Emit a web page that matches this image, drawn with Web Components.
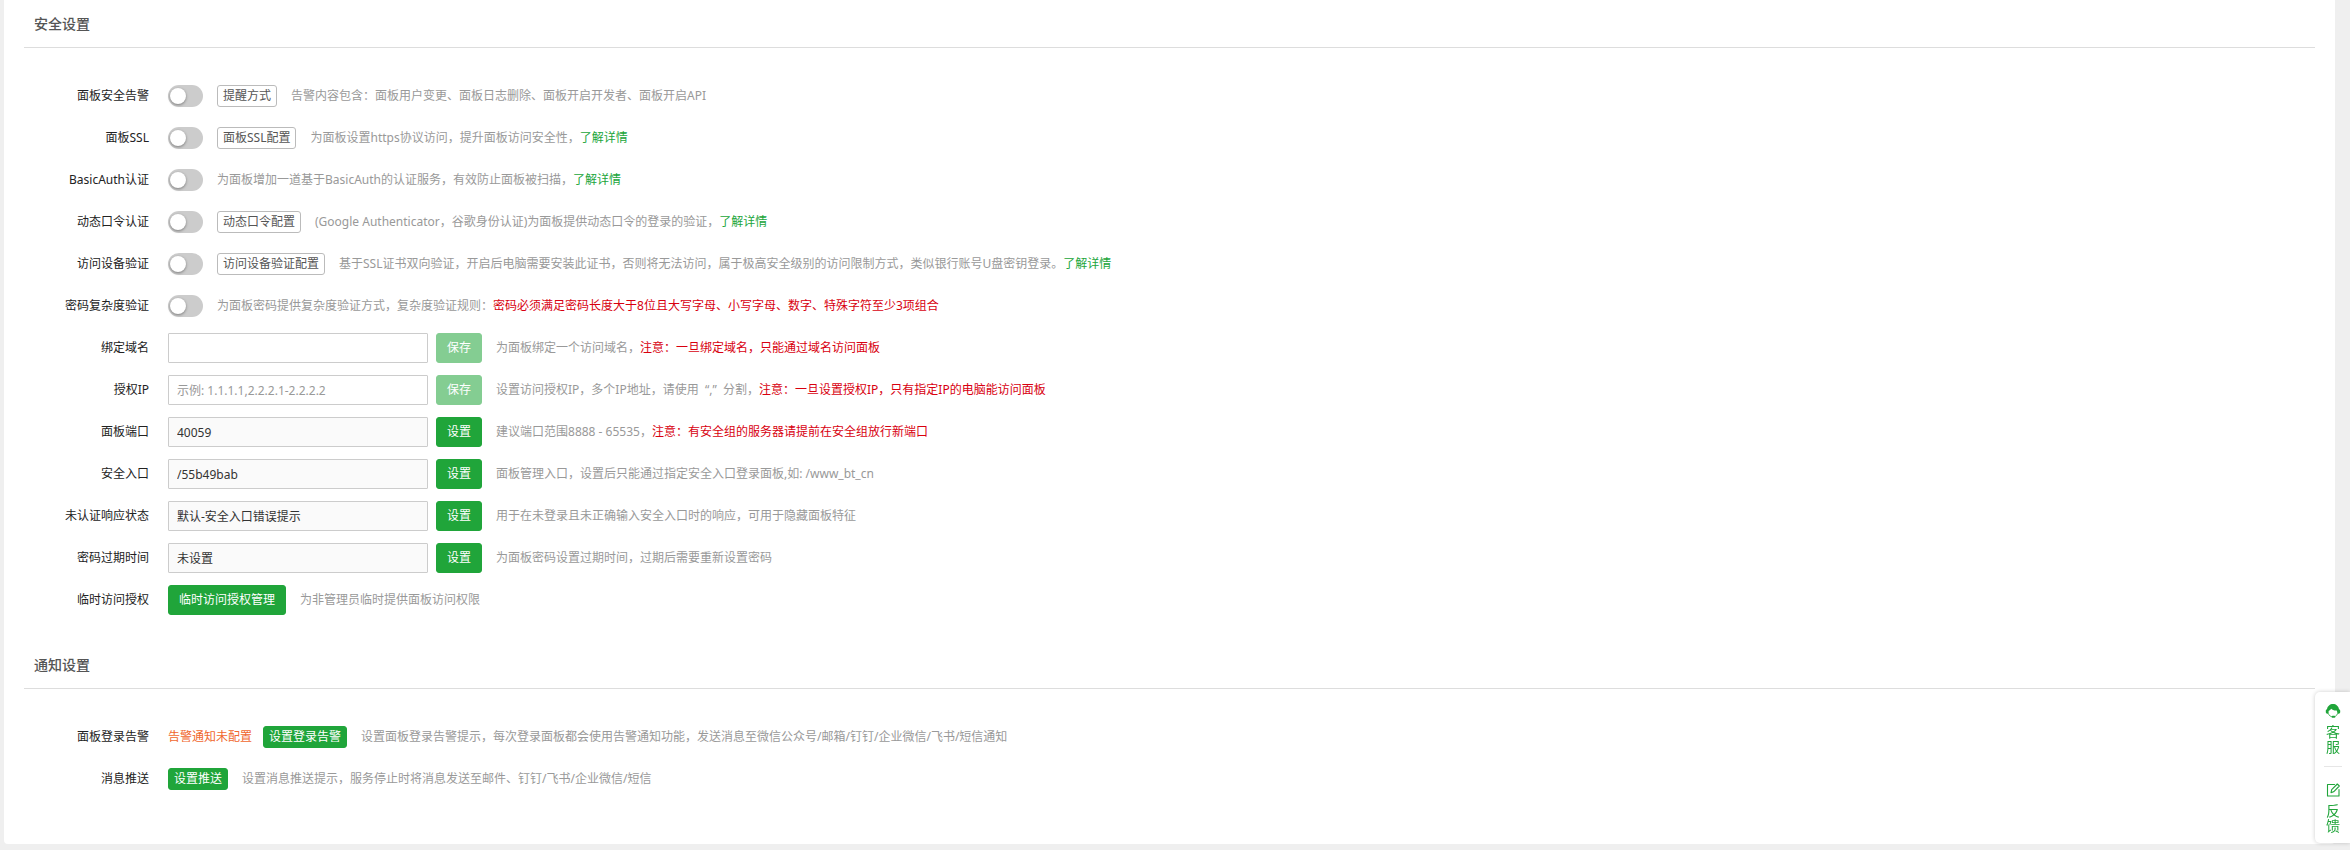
<!DOCTYPE html>
<html lang="zh-CN">
<head>
<meta charset="UTF-8">
<meta name="viewport" content="width=device-width, initial-scale=1.0">
<title>安全设置</title>
<style>
    body {
        margin: 0;
        padding: 0 15px 6px 4px;
        background: #efefef;
        color: #222;
        font: 12px/18px "Noto Sans", "Noto Sans CJK SC", sans-serif;
        text-spacing-trim: space-all;
    }
</style>
</head>
<body>
<settings-panel>
    <settings-section heading="安全设置">
        <switch-row label="面板安全告警" action="提醒方式">告警内容包含：面板用户变更、面板日志删除、面板开启开发者、面板开启API</switch-row>
        <switch-row label="面板SSL" action="面板SSL配置">为面板设置https协议访问，提升面板访问安全性，<a href="#ssl">了解详情</a></switch-row>
        <switch-row label="BasicAuth认证">为面板增加一道基于BasicAuth的认证服务，有效防止面板被扫描，<a href="#basic-auth">了解详情</a></switch-row>
        <switch-row label="动态口令认证" action="动态口令配置">(Google Authenticator，谷歌身份认证)为面板提供动态口令的登录的验证，<a href="#otp">了解详情</a></switch-row>
        <switch-row label="访问设备验证" action="访问设备验证配置">基于SSL证书双向验证，开启后电脑需要安装此证书，否则将无法访问，属于极高安全级别的访问限制方式，类似银行账号U盘密钥登录。<a href="#device">了解详情</a></switch-row>
        <switch-row label="密码复杂度验证">为面板密码提供复杂度验证方式，复杂度验证规则：<em>密码必须满足密码长度大于8位且大写字母、小写字母、数字、特殊字符至少3项组合</em></switch-row>
        <field-row label="绑定域名" action="保存" editable>为面板绑定一个访问域名，<em>注意：一旦绑定域名，只能通过域名访问面板</em></field-row>
        <field-row label="授权IP" action="保存" placeholder="示例: 1.1.1.1,2.2.2.1-2.2.2.2" editable>设置访问授权IP，多个IP地址，请使用&nbsp; “,”&nbsp; 分割，<em>注意：一旦设置授权IP，只有指定IP的电脑能访问面板</em></field-row>
        <field-row label="面板端口" action="设置" value="40059">建议端口范围8888 - 65535，<em>注意：有安全组的服务器请提前在安全组放行新端口</em></field-row>
        <field-row label="安全入口" action="设置" value="/55b49bab">面板管理入口，设置后只能通过指定安全入口登录面板,如: /www_bt_cn</field-row>
        <field-row label="未认证响应状态" action="设置" value="默认-安全入口错误提示">用于在未登录且未正确输入安全入口时的响应，可用于隐藏面板特征</field-row>
        <field-row label="密码过期时间" action="设置" value="未设置">为面板密码设置过期时间，过期后需要重新设置密码</field-row>
        <action-row label="临时访问授权" action="临时访问授权管理" large>为非管理员临时提供面板访问权限</action-row>
    </settings-section>
    <settings-section heading="通知设置">
        <action-row label="面板登录告警" status="告警通知未配置" action="设置登录告警">设置面板登录告警提示，每次登录面板都会使用告警通知功能，发送消息至微信公众号/邮箱/钉钉/企业微信/飞书/短信通知</action-row>
        <action-row label="消息推送" action="设置推送">设置消息推送提示，服务停止时将消息发送至邮件、钉钉/飞书/企业微信/短信</action-row>
    </settings-section>
</settings-panel>
<service-dock></service-dock>

<script>
    class SettingsPanel extends HTMLElement {
        connectedCallback() {
            this.attachShadow({ mode: 'open' });
            this.shadowRoot.innerHTML = `
                <style>
                    :host {
                        display: flex;
                        flex-direction: column;
                        gap: 26px;
                        padding: 0 20px 50px;
                        background: #fff;
                        border-radius: 0 0 4px 4px;
                    }
                </style>
                <slot></slot>
            `;
        }
    }

    class SettingsSection extends HTMLElement {
        connectedCallback() {
            this.attachShadow({ mode: 'open' });
            this.shadowRoot.innerHTML = `
                <style>
                    :host {
                        display: block;
                    }
                    h2 {
                        margin: 0;
                        padding: 14px 10px 13px;
                        border-bottom: 1px solid #ddd;
                        color: #555;
                        font-size: 14px;
                        font-weight: 500;
                        line-height: 20px;
                    }
                    .rows {
                        display: flex;
                        flex-direction: column;
                        gap: 12px;
                        padding-top: 33px;
                    }
                </style>
                <h2>${this.getAttribute('heading')}</h2>
                <div class="rows"><slot></slot></div>
            `;
        }
    }

    // Shared look of every row: label on the right edge of its column, controls, description
    const rowStyles = `
        :host {
            display: flex;
            align-items: center;
            gap: 14px;
            min-height: 30px;
        }
        .label {
            flex: none;
            width: 125px;
            margin-right: 5px;
            text-align: right;
        }
        .desc {
            color: #999;
        }
        ::slotted(a) {
            color: #20a53a;
            text-decoration: none;
        }
        ::slotted(em) {
            color: #d8000f;
            font-style: normal;
        }
        button {
            flex: none;
            box-sizing: border-box;
            height: 22px;
            margin: 0;
            padding: 0 5px;
            border: 1px solid #20a53a;
            border-radius: 3px;
            background: #20a53a;
            color: #fff;
            font: inherit;
            cursor: pointer;
        }
        button.large {
            height: 30px;
            padding: 0 10px;
        }
        button.plain {
            border-color: #bbb;
            background: #fff;
            color: #555;
        }
        button:disabled {
            opacity: 0.55;
            cursor: default;
        }
    `;

    class SwitchRow extends HTMLElement {
        connectedCallback() {
            const action = this.getAttribute('action');
            this.attachShadow({ mode: 'open' });
            this.shadowRoot.innerHTML = `
                <style>
                    ${rowStyles}
                    input {
                        appearance: none;
                        flex: none;
                        display: flex;
                        align-items: center;
                        box-sizing: border-box;
                        width: 35px;
                        height: 22px;
                        margin: 0;
                        padding: 2px;
                        border-radius: 11px;
                        background: #ccc;
                        cursor: pointer;
                    }
                    input::before {
                        content: "";
                        width: 16px;
                        height: 16px;
                        border-radius: 50%;
                        background: #fff;
                        box-shadow: 0 1px 3px rgba(0, 0, 0, 0.4);
                    }
                    input:checked {
                        justify-content: flex-end;
                        background: #20a53a;
                    }
                </style>
                <label class="label" for="toggle">${this.getAttribute('label')}</label>
                <input type="checkbox" id="toggle" role="switch">
                ${action ? `<button type="button" class="plain">${action}</button>` : ''}
                <span class="desc"><slot></slot></span>
            `;
        }
    }

    class FieldRow extends HTMLElement {
        connectedCallback() {
            const editable = this.hasAttribute('editable');
            this.attachShadow({ mode: 'open' });
            this.shadowRoot.innerHTML = `
                <style>
                    ${rowStyles}
                    .field {
                        display: flex;
                        gap: 8px;
                    }
                    input {
                        box-sizing: border-box;
                        width: 260px;
                        height: 30px;
                        padding: 0 8px;
                        border: 1px solid #ccc;
                        border-radius: 1px;
                        background: #fff;
                        color: #333;
                        font: inherit;
                    }
                    input:read-only {
                        background: #fafafa;
                    }
                    input::placeholder {
                        color: #999;
                    }
                </style>
                <label class="label" for="field">${this.getAttribute('label')}</label>
                <div class="field">
                    <input type="text" id="field" ${editable ? '' : 'readonly'}>
                    <button type="button" class="large" ${editable ? 'disabled' : ''}>${this.getAttribute('action')}</button>
                </div>
                <span class="desc"><slot></slot></span>
            `;

            const input = this.shadowRoot.querySelector('input');
            input.value = this.getAttribute('value') || '';
            input.placeholder = this.getAttribute('placeholder') || '';

            // Saving makes sense only once something has been typed
            input.addEventListener('input', () => {
                this.shadowRoot.querySelector('button').disabled = !input.value;
            });
        }
    }

    class ActionRow extends HTMLElement {
        connectedCallback() {
            const status = this.getAttribute('status');
            this.attachShadow({ mode: 'open' });
            this.shadowRoot.innerHTML = `
                <style>
                    ${rowStyles}
                    .action {
                        display: flex;
                        align-items: center;
                        gap: 11px;
                    }
                    .status {
                        color: #f0672e;
                    }
                </style>
                <span class="label">${this.getAttribute('label')}</span>
                <div class="action">
                    ${status ? `<span class="status">${status}</span>` : ''}
                    <button type="button" class="${this.hasAttribute('large') ? 'large' : ''}">${this.getAttribute('action')}</button>
                </div>
                <span class="desc"><slot></slot></span>
            `;
        }
    }

    class ServiceDock extends HTMLElement {
        connectedCallback() {
            this.attachShadow({ mode: 'open' });
            this.shadowRoot.innerHTML = `
                <style>
                    :host {
                        position: fixed;
                        right: 0;
                        bottom: 7px;
                        box-sizing: border-box;
                        width: 35px;
                        padding: 0 8px 0 9px;
                        border-radius: 5px 0 0 5px;
                        background: #fff;
                        box-shadow: 0 0 4px rgba(0, 0, 0, 0.2);
                    }
                    a {
                        display: flex;
                        flex-direction: column;
                        align-items: center;
                        gap: 5px;
                        padding: 11px 0 12px;
                        color: #20a53a;
                        font-size: 14px;
                        line-height: 15px;
                        text-align: center;
                        text-decoration: none;
                    }
                    a + a {
                        padding: 15px 0 10px;
                        border-top: 1px solid #e6e6e6;
                    }
                    span {
                        width: 14px;
                    }
                    svg {
                        display: block;
                        width: 16px;
                        height: 16px;
                    }
                </style>
                <a href="#service">
                    <svg viewBox="0 0 16 16" fill="#20a53a">
                        <path d="M2 6.200C2.500 3 5 1 8 1s5.500 2 6 5.200c.8.200 1.200.8 1.200 1.500v1.400c0 .9-.6 1.600-1.600 1.600h-1.200c0-1.200-.2-2.300-.7-3.200-2.300.2-4.200-.4-5.500-1.700-.6 1-1.500 1.700-2.600 2.100v2.800H2.400c-1 0-1.600-.7-1.600-1.600V7.700c0-.7.400-1.300 1.200-1.500z"/>
                        <path d="M3.200 10.500c.8 2 2.500 3.200 4.600 3.400M12.600 10.500c-.4 1.300-1.200 2.300-2.400 2.900" fill="none" stroke="#20a53a" stroke-width=".8"/>
                        <rect x="6.600" y="12.800" width="3.800" height="2" rx="1"/>
                    </svg>
                    <span>客服</span>
                </a>
                <a href="#feedback">
                    <svg viewBox="0 0 16 16" fill="none" stroke="#20a53a" stroke-width="1.100" stroke-linejoin="round" stroke-linecap="round">
                        <path d="M9.500 2.500h-7v11.500h11.500V7.500"/>
                        <path d="M6 10.600l.7-3L12.300 2l2 2-5.700 5.800z"/>
                    </svg>
                    <span>反馈</span>
                </a>
            `;
        }
    }

    customElements.define('settings-panel', SettingsPanel);
    customElements.define('settings-section', SettingsSection);
    customElements.define('switch-row', SwitchRow);
    customElements.define('field-row', FieldRow);
    customElements.define('action-row', ActionRow);
    customElements.define('service-dock', ServiceDock);
</script>
</body>
</html>
